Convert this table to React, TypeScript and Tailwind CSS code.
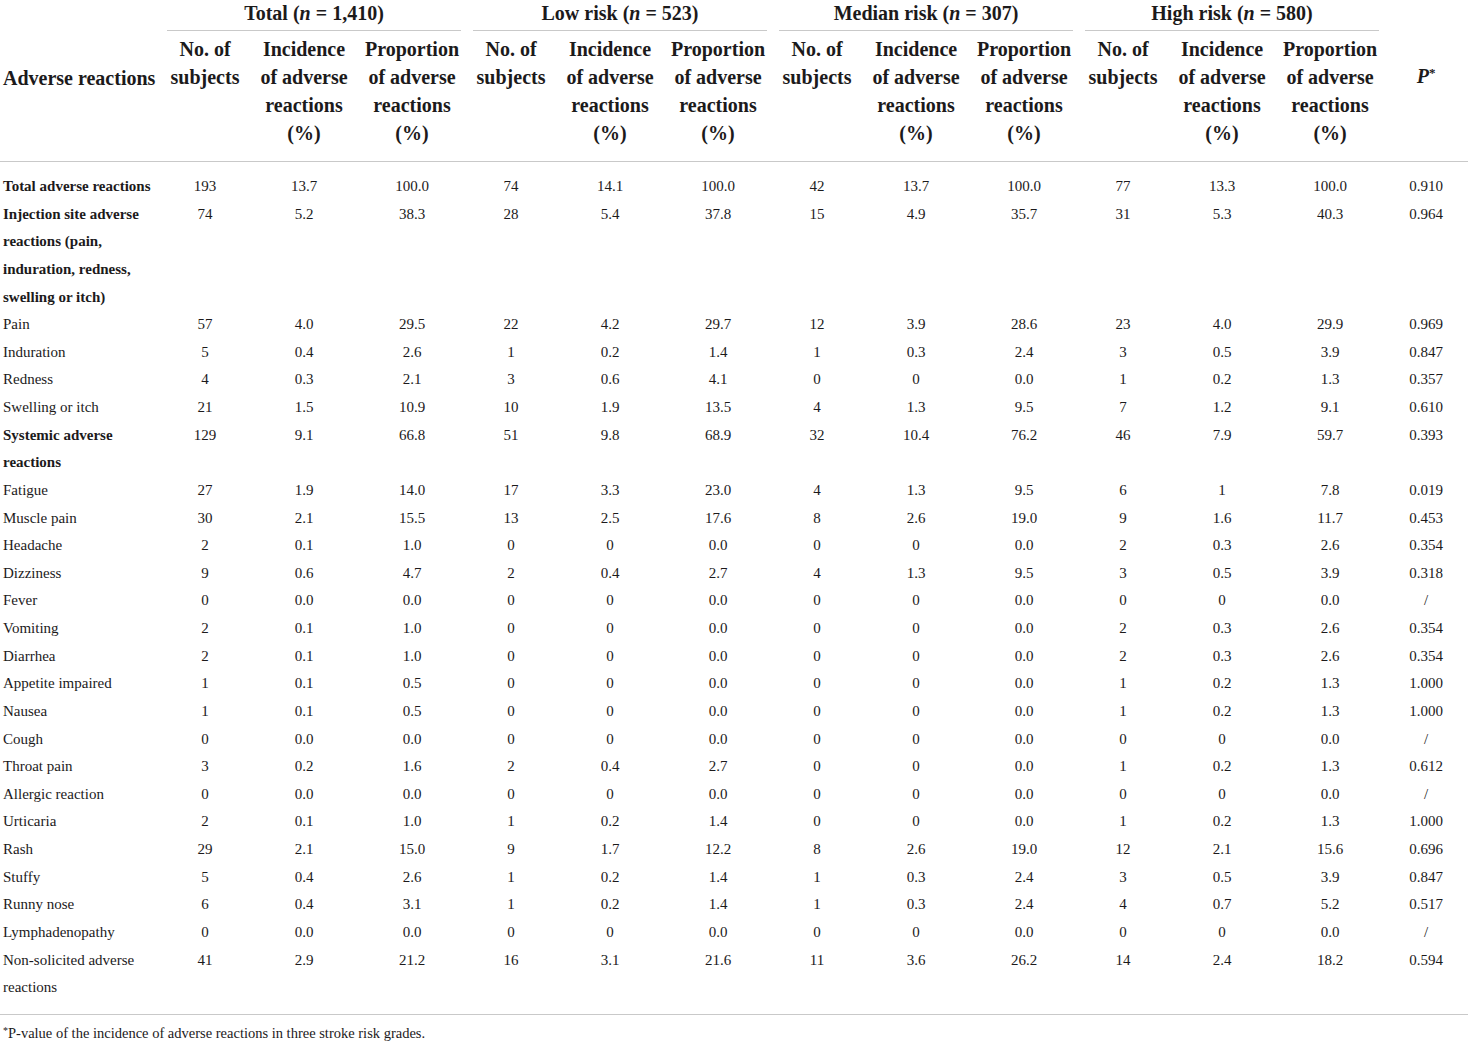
import React from "react";

type Row = { label: string[]; bold?: boolean; values: string[] };

const rows: Row[] = [
  { label: ["Total adverse reactions"], bold: true, values: ["193", "13.7", "100.0", "74", "14.1", "100.0", "42", "13.7", "100.0", "77", "13.3", "100.0", "0.910"] },
  { label: ["Injection site adverse", "reactions (pain,", "induration, redness,", "swelling or itch)"], bold: true, values: ["74", "5.2", "38.3", "28", "5.4", "37.8", "15", "4.9", "35.7", "31", "5.3", "40.3", "0.964"] },
  { label: ["Pain"], values: ["57", "4.0", "29.5", "22", "4.2", "29.7", "12", "3.9", "28.6", "23", "4.0", "29.9", "0.969"] },
  { label: ["Induration"], values: ["5", "0.4", "2.6", "1", "0.2", "1.4", "1", "0.3", "2.4", "3", "0.5", "3.9", "0.847"] },
  { label: ["Redness"], values: ["4", "0.3", "2.1", "3", "0.6", "4.1", "0", "0", "0.0", "1", "0.2", "1.3", "0.357"] },
  { label: ["Swelling or itch"], values: ["21", "1.5", "10.9", "10", "1.9", "13.5", "4", "1.3", "9.5", "7", "1.2", "9.1", "0.610"] },
  { label: ["Systemic adverse", "reactions"], bold: true, values: ["129", "9.1", "66.8", "51", "9.8", "68.9", "32", "10.4", "76.2", "46", "7.9", "59.7", "0.393"] },
  { label: ["Fatigue"], values: ["27", "1.9", "14.0", "17", "3.3", "23.0", "4", "1.3", "9.5", "6", "1", "7.8", "0.019"] },
  { label: ["Muscle pain"], values: ["30", "2.1", "15.5", "13", "2.5", "17.6", "8", "2.6", "19.0", "9", "1.6", "11.7", "0.453"] },
  { label: ["Headache"], values: ["2", "0.1", "1.0", "0", "0", "0.0", "0", "0", "0.0", "2", "0.3", "2.6", "0.354"] },
  { label: ["Dizziness"], values: ["9", "0.6", "4.7", "2", "0.4", "2.7", "4", "1.3", "9.5", "3", "0.5", "3.9", "0.318"] },
  { label: ["Fever"], values: ["0", "0.0", "0.0", "0", "0", "0.0", "0", "0", "0.0", "0", "0", "0.0", "/"] },
  { label: ["Vomiting"], values: ["2", "0.1", "1.0", "0", "0", "0.0", "0", "0", "0.0", "2", "0.3", "2.6", "0.354"] },
  { label: ["Diarrhea"], values: ["2", "0.1", "1.0", "0", "0", "0.0", "0", "0", "0.0", "2", "0.3", "2.6", "0.354"] },
  { label: ["Appetite impaired"], values: ["1", "0.1", "0.5", "0", "0", "0.0", "0", "0", "0.0", "1", "0.2", "1.3", "1.000"] },
  { label: ["Nausea"], values: ["1", "0.1", "0.5", "0", "0", "0.0", "0", "0", "0.0", "1", "0.2", "1.3", "1.000"] },
  { label: ["Cough"], values: ["0", "0.0", "0.0", "0", "0", "0.0", "0", "0", "0.0", "0", "0", "0.0", "/"] },
  { label: ["Throat pain"], values: ["3", "0.2", "1.6", "2", "0.4", "2.7", "0", "0", "0.0", "1", "0.2", "1.3", "0.612"] },
  { label: ["Allergic reaction"], values: ["0", "0.0", "0.0", "0", "0", "0.0", "0", "0", "0.0", "0", "0", "0.0", "/"] },
  { label: ["Urticaria"], values: ["2", "0.1", "1.0", "1", "0.2", "1.4", "0", "0", "0.0", "1", "0.2", "1.3", "1.000"] },
  { label: ["Rash"], values: ["29", "2.1", "15.0", "9", "1.7", "12.2", "8", "2.6", "19.0", "12", "2.1", "15.6", "0.696"] },
  { label: ["Stuffy"], values: ["5", "0.4", "2.6", "1", "0.2", "1.4", "1", "0.3", "2.4", "3", "0.5", "3.9", "0.847"] },
  { label: ["Runny nose"], values: ["6", "0.4", "3.1", "1", "0.2", "1.4", "1", "0.3", "2.4", "4", "0.7", "5.2", "0.517"] },
  { label: ["Lymphadenopathy"], values: ["0", "0.0", "0.0", "0", "0", "0.0", "0", "0", "0.0", "0", "0", "0.0", "/"] },
  { label: ["Non-solicited adverse", "reactions"], values: ["41", "2.9", "21.2", "16", "3.1", "21.6", "11", "3.6", "26.2", "14", "2.4", "18.2", "0.594"] },
];

const groups = [
  { name: "Total", n: "1,410" },
  { name: "Low risk", n: "523" },
  { name: "Median risk", n: "307" },
  { name: "High risk", n: "580" },
];

const SubHeads = () => (
  <>
    <th className="align-top pt-[4px] pb-[14px] font-bold">
      No. of
      <br />
      subjects
    </th>
    <th className="align-top pt-[4px] pb-[14px] font-bold">
      Incidence
      <br />
      of adverse
      <br />
      reactions
      <br />
      (%)
    </th>
    <th className="align-top pt-[4px] pb-[14px] font-bold">
      Proportion
      <br />
      of adverse
      <br />
      reactions
      <br />
      (%)
    </th>
  </>
);

export default function App() {
  return (
    <div className="w-[1468px] bg-white text-[#1c1a1b] font-['Liberation_Serif','Times_New_Roman',serif]">
      <table className="w-full table-fixed border-collapse">
        <colgroup>
          <col className="w-[160px]" />
          {groups.map((g) => (
            <React.Fragment key={g.name}>
              <col className="w-[90px]" />
              <col className="w-[108px]" />
              <col className="w-[108px]" />
            </React.Fragment>
          ))}
          <col />
        </colgroup>
        <thead className="text-[20px] leading-[28px]">
          <tr>
            <th rowSpan={2} className="text-left align-middle pl-[3px] pb-[6px] font-bold border-b border-[#c9c9c9] whitespace-nowrap">
              Adverse reactions
            </th>
            {groups.map((g) => (
              <th key={g.name} colSpan={3} className="p-0 font-bold">
                <div className="leading-[26px] pb-[4px] mr-[5px] ml-[7px] border-b border-[#c9c9c9] text-center">
                  {g.name} (<i>n</i> = {g.n})
                </div>
              </th>
            ))}
            <th rowSpan={2} className="align-middle pb-[6px] font-bold border-b border-[#c9c9c9]">
              <i>P</i>
              <span className="relative top-[-6px] text-[13px]">*</span>
            </th>
          </tr>
          <tr className="border-b border-[#c9c9c9]">
            {groups.map((g) => (
              <SubHeads key={g.name} />
            ))}
          </tr>
        </thead>
        <tbody className="leading-[27.62px]">
          {rows.map((r, i) => {
            const first = i === 0;
            const last = i === rows.length - 1;
            const pad = first ? "pt-[11px]" : last ? "pb-[12px]" : "";
            return (
              <tr key={i} className={last ? "border-b border-[#c9c9c9]" : ""}>
                <td className={`align-top text-left pl-[3px] text-[15px] ${r.bold ? "font-bold" : ""} ${pad}`}>
                  {r.label.map((l, j) => (
                    <div key={j} className="whitespace-nowrap">
                      {l}
                    </div>
                  ))}
                </td>
                {r.values.map((v, j) => (
                  <td key={j} className={`align-top text-center text-[15px] ${pad}`}>
                    {v}
                  </td>
                ))}
              </tr>
            );
          })}
        </tbody>
      </table>
      <p className="pl-[3px] pt-[8px] text-[14.5px] leading-[20px]">
        <span className="relative top-[-4px] text-[10px]">*</span>P-value of the incidence of adverse reactions in three stroke risk grades.
      </p>
    </div>
  );
}
